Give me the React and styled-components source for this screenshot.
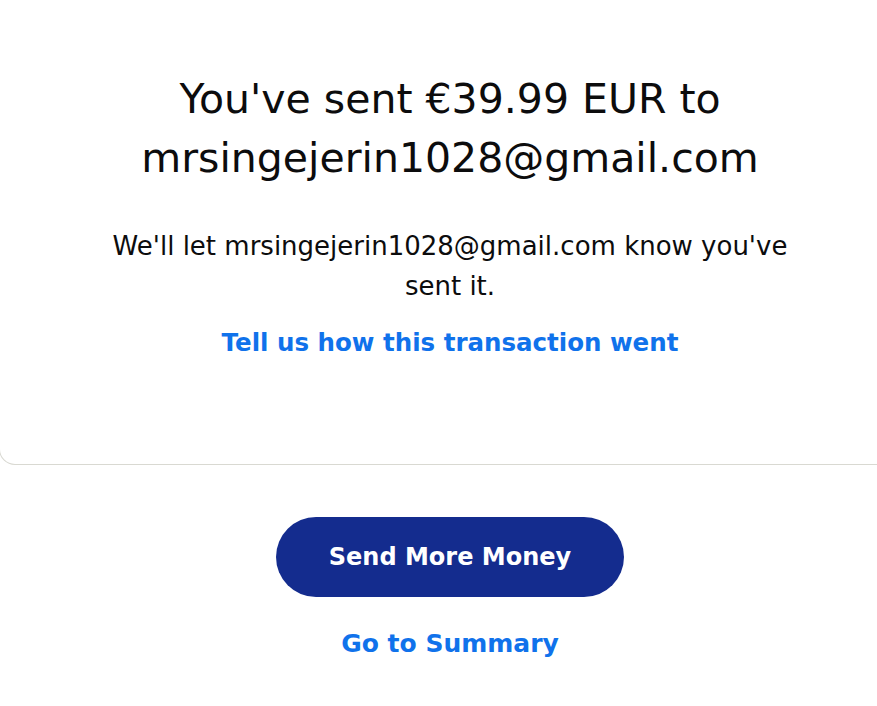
import React from "react";
import styled, { createGlobalStyle } from "styled-components";

const Global = createGlobalStyle`
  html, body { margin: 0; padding: 0; background: #ffffff; overflow: hidden; }
  body { font-family: "DejaVu Sans", "Noto Sans", "Liberation Sans", sans-serif; color: #001435; }
`;

const Page = styled.div`
  width: 902px;
  margin-left: -1px;
  display: flex;
  flex-direction: column;
  align-items: center;
`;

const Card = styled.section`
  box-sizing: border-box;
  width: 100%;
  padding: 70px 40px 101px;
  border: 1px solid #d9d9d2;
  border-top: none;
  border-radius: 0 0 16px 16px;
  display: flex;
  flex-direction: column;
  align-items: center;
  text-align: center;
`;

const Heading = styled.h1`
  margin: 0;
  font-size: 41px;
  line-height: 59px;
  font-weight: 400;
  color: #0c0c0d;
  max-width: 640px;
`;

const Message = styled.p`
  margin: 38px 0 0;
  font-size: 26px;
  line-height: 40px;
  color: #0c0c0d;
  max-width: 700px;
`;

const TextLink = styled.a`
  display: block;
  font-size: ${(p) => p.$size || 25}px;
  line-height: 40px;
  font-weight: 700;
  color: #1072eb;
  text-decoration: none;
  cursor: pointer;
  margin-top: ${(p) => p.$top || 0}px;
`;

const Actions = styled.div`
  display: flex;
  flex-direction: column;
  align-items: center;
  padding-top: 52px;
`;

const PrimaryButton = styled.button`
  width: 348px;
  height: 80px;
  border: none;
  border-radius: 40px;
  background: #142c8e;
  color: #ffffff;
  font-family: inherit;
  font-size: 24px;
  font-weight: 700;
  cursor: pointer;
`;

export default function App() {
  return (
    <>
      <Global />
      <Page>
        <Card>
          <Heading>You've sent €39.99 EUR to mrsingejerin1028@gmail.com</Heading>
          <Message>We'll let mrsingejerin1028@gmail.com know you've sent it.</Message>
          <TextLink $top={17} $size={24.5}>Tell us how this transaction went</TextLink>
        </Card>
        <Actions>
          <PrimaryButton>Send More Money</PrimaryButton>
          <TextLink $top={27} $size={25}>Go to Summary</TextLink>
        </Actions>
      </Page>
    </>
  );
}
